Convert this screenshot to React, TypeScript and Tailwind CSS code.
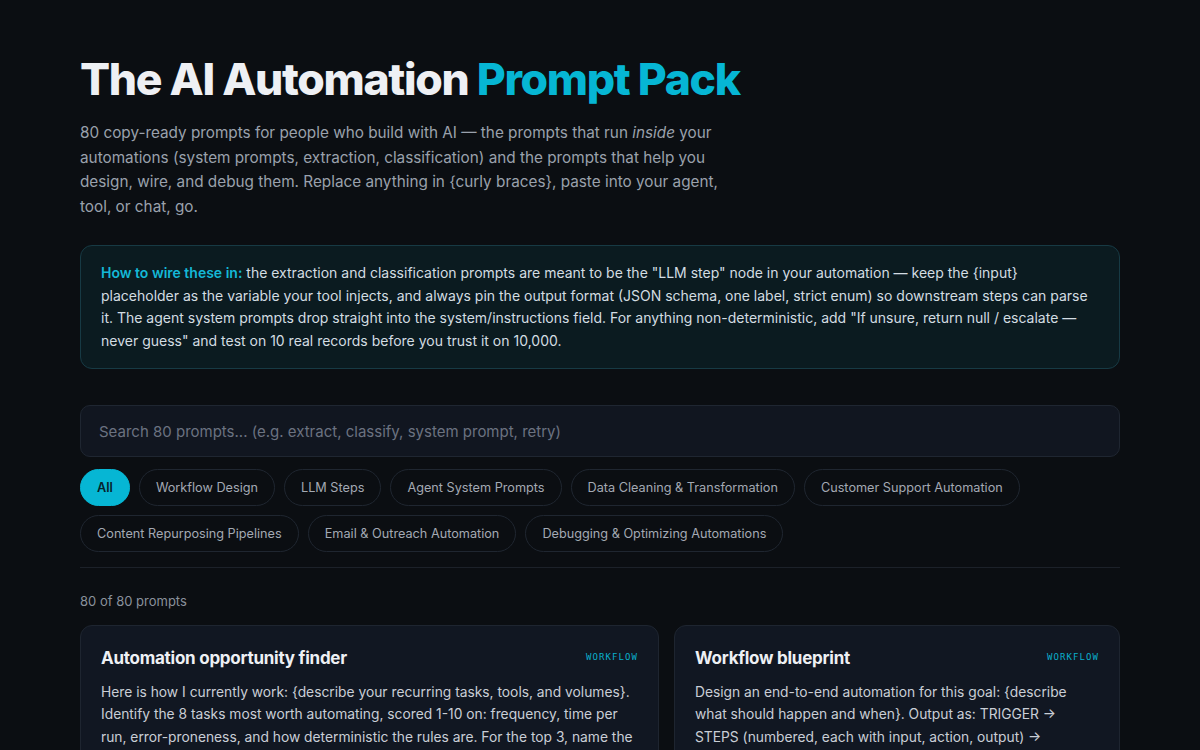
import { useState } from 'react';

const categories = [
  'All',
  'Workflow Design',
  'LLM Steps',
  'Agent System Prompts',
  'Data Cleaning & Transformation',
  'Customer Support Automation',
  'Content Repurposing Pipelines',
  'Email & Outreach Automation',
  'Debugging & Optimizing Automations',
];

const prompts = [
  {
    title: 'Automation opportunity finder',
    tag: 'WORKFLOW',
    body: 'Here is how I currently work: {describe your recurring tasks, tools, and volumes}. Identify the 8 tasks most worth automating, scored 1-10 on: frequency, time per run, error-proneness, and how deterministic the rules are. For the top 3, name the trigger, the tools involved, and where a human should stay in the loop.',
  },
  {
    title: 'Workflow blueprint',
    tag: 'WORKFLOW',
    body: 'Design an end-to-end automation for this goal: {describe what should happen and when}. Output as: TRIGGER → STEPS (numbered, each with input, action, output) → FAILURE HANDLING → WHAT TO LOG. Flag every step that needs an LLM.',
  },
];

function PromptCard({ title, tag, body }: { title: string; tag: string; body: string }) {
  return (
    <div className="rounded-xl border border-[#1e2530] bg-[#111722] px-5 pt-[20px] pb-5">
      <div className="flex items-start justify-between gap-4 mb-[11px]">
        <h3 className="text-[17px] leading-[24px] font-bold tracking-[-0.015em] text-[#eef0f4]">{title}</h3>
        <span className="mt-[5px] font-['DejaVu_Sans_Mono',monospace] text-[9px] tracking-[0.12em] text-[#0aaecb]">{tag}</span>
      </div>
      <p className="text-[13.8px] leading-[22.5px] text-[#c9ced6]">{body}</p>
    </div>
  );
}

export default function App() {
  const [active, setActive] = useState('All');

  return (
    <div className="min-h-screen bg-[#0b0e12] font-['Inter',sans-serif]">
      <div className="mx-auto w-[1040px] pt-[53px] pb-10">
        <h1 className="text-[44.5px] leading-[52px] font-extrabold tracking-[-0.03em] text-[#eef0f4]">
          The AI Automation <span className="text-[#06b6d4]">Prompt Pack</span>
        </h1>

        <p className="mt-[16px] w-[650px] text-[15.3px] leading-[24.5px] text-[#9aa1ac]">
          80 copy-ready prompts for people who build with AI — the prompts that run <em>inside</em> your
          automations (system prompts, extraction, classification) and the prompts that help you design, wire,
          and debug them. Replace anything in {'{curly braces}'}, paste into your agent, tool, or chat, go.
        </p>

        <div className="mt-[26px] rounded-xl border border-[#173a44] bg-[#0b1b20] px-5 py-4 text-[14px] leading-[22.6px] text-[#d3dde2]">
          <span className="font-semibold text-[#14b8d6]">How to wire these in:</span> the extraction and
          classification prompts are meant to be the "LLM step" node in your automation — keep the {'{input}'}{' '}
          placeholder as the variable your tool injects, and always pin the output format (JSON schema, one label,
          strict enum) so downstream steps can parse it. The agent system prompts drop straight into the
          system/instructions field. For anything non-deterministic, add "If unsure, return null / escalate —
          never guess" and test on 10 real records before you trust it on 10,000.
        </div>

        <input
          className="mt-[36px] block h-[52px] w-full rounded-[10px] border border-[#1f2631] bg-[#111620] px-[18px] text-[15px] text-[#d1d5db] placeholder:text-[#6b7280] outline-none"
          placeholder="Search 80 prompts... (e.g. extract, classify, system prompt, retry)"
        />

        <div className="mt-3 flex flex-wrap gap-x-[9px] gap-y-[9px]">
          {categories.map((c) =>
            c === active ? (
              <button
                key={c}
                onClick={() => setActive(c)}
                className="h-[37px] rounded-full border border-[#06b6d4] bg-[#06b6d4] px-4 text-[12.7px] font-semibold text-[#06222a]"
              >
                {c}
              </button>
            ) : (
              <button
                key={c}
                onClick={() => setActive(c)}
                className="h-[37px] rounded-full border border-[#1f2630] px-4 text-[12.7px] text-[#a3a9b3]"
              >
                {c}
              </button>
            )
          )}
        </div>

        <div className="mt-[15px] h-px bg-[#1c2129]" />

        <p className="mt-[24px] text-[13px] text-[#8a919c]">80 of 80 prompts</p>

        <div className="mt-[13px] grid grid-cols-[579px_1fr] gap-[15px]">
          {prompts.map((p) => (
            <PromptCard key={p.title} {...p} />
          ))}
        </div>
      </div>
    </div>
  );
}
